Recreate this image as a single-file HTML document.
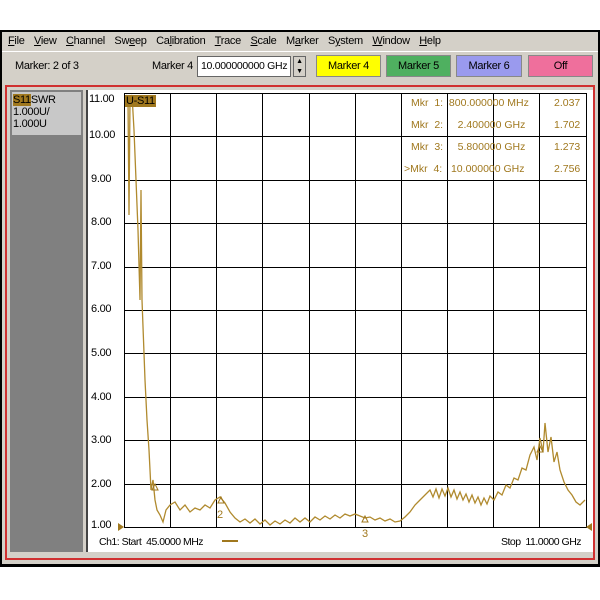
<!DOCTYPE html>
<html><head><style>
*{margin:0;padding:0;box-sizing:border-box}
body{width:600px;height:600px;background:#fff;position:relative;overflow:hidden;font-family:"Liberation Sans",sans-serif;font-size:11px;color:#000;letter-spacing:-0.3px}
.a{position:absolute;white-space:nowrap}
u{text-decoration:underline}
.btn{position:absolute;top:55px;height:22px;text-align:center;line-height:20px;border:1px solid #888;font-size:11px}
.mk{color:#a0781e;font-size:10.5px;letter-spacing:0}
</style></head><body>
<div class="a" style="left:0;top:30px;width:600px;height:537px;background:#000"></div>
<div class="a" style="left:2px;top:32px;width:596px;height:532px;background:#d4d0c8"></div>
<div class="a" style="top:35px;left:8px;word-spacing:2px">
<span><u>F</u>ile</span>&nbsp; <span><u>V</u>iew</span>&nbsp; <span><u>C</u>hannel</span>&nbsp; <span>Sw<u>e</u>ep</span>&nbsp; <span>Ca<u>l</u>ibration</span>&nbsp; <span><u>T</u>race</span>&nbsp; <span><u>S</u>cale</span>&nbsp; <span>M<u>a</u>rker</span>&nbsp; <span>S<u>y</u>stem</span>&nbsp; <span><u>W</u>indow</span>&nbsp; <span><u>H</u>elp</span></div>
<div class="a" style="left:2px;top:51px;width:596px;height:1px;background:#fff"></div>
<div class="a" style="left:15px;top:60px">Marker: 2 of 3</div>
<div class="a" style="left:152px;top:60px">Marker 4</div>
<div class="a" style="left:197px;top:56px;width:94px;height:21px;background:#fff;border:1px solid #666;padding:3px 3px;font-size:10.5px;overflow:hidden">10.000000000 GHz</div>
<div class="a" style="left:293px;top:56px;width:13px;height:21px;background:#d4d0c8;border:1px solid #666;font-size:7px;text-align:center;line-height:10px">▲<br>▼</div>
<div class="btn" style="left:316px;width:65px;background:#ffff00">Marker 4</div>
<div class="btn" style="left:386px;width:65px;background:#4fb060">Marker 5</div>
<div class="btn" style="left:456px;width:66px;background:#9a9aee">Marker 6</div>
<div class="btn" style="left:528px;width:65px;background:#ef6f9c">Off</div>
<div class="a" style="left:5px;top:85px;width:590px;height:475px;border:2px solid #d03030;background:#d4d0c8"></div>
<div class="a" style="left:10px;top:90px;width:73px;height:462px;background:#808080"></div>
<div class="a" style="left:12px;top:92px;width:69px;height:43px;background:#c8c8c8;line-height:12px;padding:2px 1px">
<span style="background:#a0781e;color:#000">S11</span>SWR<br>1.000U/<br>1.000U</div>
<div class="a" style="left:86px;top:90px;width:507px;height:462px;background:#fff;border-left:2px solid #444"></div>
<svg class="a" style="left:0;top:0" width="600" height="600">
<g stroke="#000" stroke-width="1">
<rect x="124.5" y="93.5" width="462" height="434" fill="none"/>
<path d="M170.5 93v434M216.5 93v434M262.5 93v434M309.5 93v434M355.5 93v434M401.5 93v434M447.5 93v434M493.5 93v434M539.5 93v434M124 136.5h462M124 180.5h462M124 223.5h462M124 267.5h462M124 310.5h462M124 353.5h462M124 397.5h462M124 440.5h462M124 484.5h462"/>
</g>
<polyline fill="none" stroke="#b08a2e" stroke-width="1.3" points="126,95 128,100 129,215 130,100 132,95 134,130 136,180 138,230 140,300 141,190 142,300 145,380 147,420 149,450 151,490 153,480 155,500 157,510 160,515 163,522 166,510 170,505 175,502 180,510 185,505 190,512 195,508 200,510 205,505 210,508 215,500 220,497 225,503 230,512 235,518 240,522 245,519 250,523 255,519 260,524 265,520 270,525 275,521 280,524 285,520 290,523 295,518 300,522 305,518 310,522 315,517 320,520 325,516 330,519 335,515 340,518 345,514 350,516 355,514 360,516 365,518 370,517 375,520 380,518 385,521 390,519 395,522 400,521 405,517 410,512 415,505 420,500 425,495 430,490 433,497 436,489 439,498 442,489 445,496 448,488 451,497 454,490 457,499 460,492 463,500 466,494 469,502 472,495 475,503 478,497 481,505 484,498 487,504 490,496 494,500 498,492 502,495 506,485 510,488 514,478 518,480 522,468 526,470 530,455 534,447 537,460 540,438 543,452 545,423 548,452 551,437 554,462 557,452 560,470 564,482 568,490 572,495 576,502 580,505 585,500"/>
<g fill="none" stroke="#a0781e"><path d="M152 490l3-6 3 6z M218 503l3-6 3 6z M362 522l3-6 3 6z M537 452l3-6 3 6z"/></g>
<g fill="#a0781e"><path d="M118 523l6 4-6 4z M592 523l-6 4 6 4z"/></g>
<line x1="222" y1="541" x2="238" y2="541" stroke="#a0781e" stroke-width="2"/>
</svg>
<div class="a" style="left:89px;top:93px">11.00</div>
<div class="a" style="left:89px;top:129px">10.00</div>
<div class="a" style="left:91px;top:173px">9.00</div>
<div class="a" style="left:91px;top:216px">8.00</div>
<div class="a" style="left:91px;top:260px">7.00</div>
<div class="a" style="left:91px;top:303px">6.00</div>
<div class="a" style="left:91px;top:347px">5.00</div>
<div class="a" style="left:91px;top:391px">4.00</div>
<div class="a" style="left:91px;top:434px">3.00</div>
<div class="a" style="left:91px;top:478px">2.00</div>
<div class="a" style="left:91px;top:519px">1.00</div>
<div class="a" style="left:125px;top:95px;background:#a0781e;color:#000;padding:0 1px">U-S11</div>
<div class="a mk" style="left:411px;top:97px">Mkr &nbsp;1:&nbsp; 800.000000 MHz</div>
<div class="a mk" style="left:411px;top:119px">Mkr &nbsp;2:&nbsp;&nbsp;&nbsp;&nbsp; 2.400000 GHz</div>
<div class="a mk" style="left:411px;top:141px">Mkr &nbsp;3:&nbsp;&nbsp;&nbsp;&nbsp; 5.800000 GHz</div>
<div class="a mk" style="left:404px;top:163px">&gt;Mkr &nbsp;4:&nbsp;&nbsp; 10.000000 GHz</div>
<div class="a mk" style="left:554px;top:97px">2.037</div>
<div class="a mk" style="left:554px;top:119px">1.702</div>
<div class="a mk" style="left:554px;top:141px">1.273</div>
<div class="a mk" style="left:554px;top:163px">2.756</div>
<div class="a mk" style="left:217px;top:509px;font-size:11px">2</div>
<div class="a mk" style="left:362px;top:528px;font-size:11px">3</div>
<div class="a" style="left:99px;top:536px;font-size:10.5px;letter-spacing:-0.5px">Ch1: Start&nbsp; 45.0000 MHz</div>
<div class="a" style="left:501px;top:536px;font-size:10.5px;letter-spacing:-0.5px">Stop&nbsp; 11.0000 GHz</div>
</body></html>
